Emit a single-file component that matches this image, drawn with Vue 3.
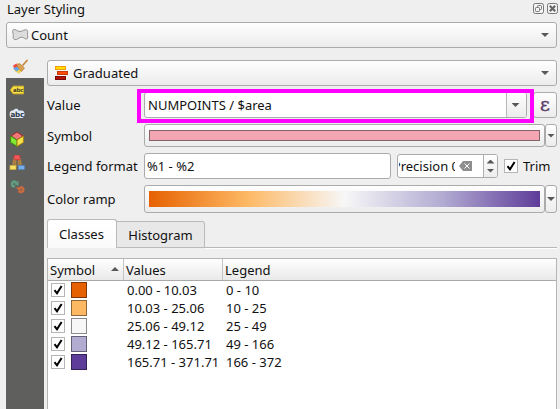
<script setup>
const classes = [
  { color: '#e66101', edge: '#80360a', values: '0.00 - 10.03', legend: '0 - 10' },
  { color: '#fdb863', edge: '#8d6737', values: '10.03 - 25.06', legend: '10 - 25' },
  { color: '#f7f7f7', edge: '#8a8a8a', values: '25.06 - 49.12', legend: '25 - 49' },
  { color: '#b2abd2', edge: '#636075', values: '49.12 - 165.71', legend: '49 - 166' },
  { color: '#5e3c99', edge: '#342155', values: '165.71 - 371.71', legend: '166 - 372' },
]
</script>

<template>
  <div class="dock">
    <header class="title">
      <span>Layer Styling</span>
      <span class="dock-buttons">
        <svg width="11" height="11" viewBox="0 0 11 11" fill="none" stroke="#777">
          <rect x=".5" y=".5" width="10" height="10" rx="1.8" fill="#f4f4f4" />
          <rect x="4.5" y="2.5" width="4" height="4" rx=".8" />
          <rect x="2.5" y="4.5" width="4" height="4" rx=".8" fill="#f4f4f4" />
        </svg>
        <svg width="11" height="11" viewBox="0 0 11 11" fill="none" stroke="#777">
          <rect x=".5" y=".5" width="10" height="10" rx="1.8" fill="#f4f4f4" />
          <path d="M2.800 2.800L8.200 8.200M8.200 2.800L2.800 8.200" stroke="#666" stroke-width="2.200" />
        </svg>
      </span>
    </header>

    <div class="combo layer">
      <svg class="poly" width="18" height="14" viewBox="0 0 18 14">
        <path d="M2.300 2.800C4.500 1.500 6 4.600 9 4.500S13.500 1.800 15.800 3c1.400.8.8 2.200.7 4 0 2 .8 4-.7 4.900-1.700.8-2.800-1.700-5-1.700-2.800 0-4.800 3.200-7 2.400C1.200 11.600 2.600 9.500 2.300 7.500 2 5.600.9 3.700 2.300 2.800Z" fill="#dcdcdc" stroke="#929292" />
      </svg>
      <span>Count</span>
      <i class="arrow down"></i>
    </div>

    <div class="body">
      <nav class="side">
        <div class="side-item current">
          <svg width="16" height="16" viewBox="0 0 16 16">
            <path d="M1.500 6.500l4.500-2.500 5 6-4 4.500-4.500-2.500z" fill="#e8c46a" />
            <path d="M1 6.500l3.500-2 2 3.500-4 2z" fill="#ef4b4b" />
            <path d="M1 9.500l4.500-2 2 3-2.500 2z" fill="#5fa6ee" />
            <path d="M5 12.500l3-3 2 2-3 3z" fill="#f2d34d" />
            <path d="M7.500 4.500l5 4.500-3 3.500-5-6z" fill="#d9a253" stroke="#b77a35" stroke-width=".7" />
            <path d="M11 6l4-4.500" stroke="#c78a42" stroke-width="1.800" stroke-linecap="round" />
          </svg>
        </div>
        <div class="side-rest">
          <svg width="16" height="16" viewBox="0 0 16 16">
            <path d="M1.500 8l2.700-3.800H14.500v7.600H4.200z" fill="#f8e04b" stroke="#d8b923" stroke-linejoin="round" />
            <text x="4" y="10.200" font-size="5.600" font-weight="700" fill="#454025">abc</text>
          </svg>
          <svg width="16" height="16" viewBox="0 0 16 16">
            <path d="M3.500 4.500Q5.500 4 6 2.700h2.500l1 1.800h3q3 .2 3 3.700t-3 3.700h-9Q.6 11.700.6 8.200t2.900-3.700z" fill="#dfe9f5" />
            <text x="1.500" y="10.700" font-size="7.200" font-weight="700" fill="#303a48">abc</text>
          </svg>
          <svg width="16" height="16" viewBox="0 0 16 16" stroke-linejoin="round">
            <path d="M8 1l6 4-6 4-6-4z" fill="#ee7777" stroke="#a52222" />
            <path d="M1.600 5L8 9v6.300L1.600 11.500z" fill="#82e833" stroke="#3f8616" />
            <path d="M14.400 5L8 9v6.300l6.400-3.800z" fill="#f8e34a" stroke="#a68416" />
          </svg>
          <svg width="16" height="16" viewBox="0 0 16 16">
            <path d="M4 10.500L5 4h6l1 6.500M6.500 5v6.500M9.700 5v6.500" fill="none" stroke="#b08040" stroke-width="1.800" />
            <rect x="5" y="0" width="6" height="4.800" fill="#ef5858" stroke="#bd3737" stroke-width=".7" />
            <rect x="1" y="10.500" width="6" height="4" fill="#f5df67" stroke="#d1ad3b" stroke-width=".7" />
            <rect x="9.300" y="10.500" width="6.200" height="4" fill="#78afea" stroke="#5284bd" stroke-width=".7" />
          </svg>
          <svg width="16" height="16" viewBox="0 0 16 16" fill="none">
            <path d="M7 3C4.500 1.800 2.700 3.500 3 5.500c.2 1.700 1.700 2.200 3 1.500" stroke="#609e80" stroke-width="2.600" />
            <path d="M9.500 1.500v5.500L5 5z" fill="#609e80" />
            <path d="M11.500 8c2.800.2 3.200 2.500 2.300 4-1 1.500-3.300 1.300-4 0" stroke="#cd6a3d" stroke-width="2.600" />
            <path d="M7 8.500l5.500-.5-1.500 5z" fill="#cd6a3d" />
          </svg>
        </div>
      </nav>

      <main class="main">
        <div class="combo renderer">
          <svg width="14" height="14" viewBox="0 0 14 14">
            <rect x=".5" y=".5" width="10" height="3" fill="#ffdf00" stroke="#f39c12" />
            <rect x="2.500" y="5.500" width="10" height="3" fill="#ff4b0b" stroke="#c63b05" />
            <rect x=".5" y="10.500" width="10" height="3" fill="#b51207" stroke="#790c05" />
          </svg>
          <span>Graduated</span>
          <i class="arrow down"></i>
        </div>

        <div class="row value-row">
          <label>Value</label>
          <div class="field value">
            <span>NUMPOINTS / $area</span>
            <div class="drop"><i class="arrow down"></i></div>
            <div class="highlight"></div>
          </div>
          <button class="btn eps">ε</button>
        </div>

        <div class="row symbol-row">
          <label>Symbol</label>
          <button class="btn wide"><span class="swatch"></span></button>
          <button class="btn mini"><i class="arrow down"></i></button>
        </div>

        <div class="row format-row">
          <label>Legend format</label>
          <div class="field format">%1 - %2</div>
          <div class="field spin">
            <span class="clip"><span>Precision 0</span></span>
            <svg width="13" height="10" viewBox="0 0 13 10">
              <path d="M0 5L4 0h9v10H4z" fill="#8e8e8e" />
              <path d="M5.500 2.500l5 5M10.500 2.500l-5 5" stroke="#fff" />
            </svg>
            <span class="steps"><i class="arrow up"></i><i class="arrow down"></i></span>
          </div>
          <span class="check"><svg width="10" height="10" viewBox="0 0 10 10"><path d="M1.500 5.200L4 8.300 8.600 1" /></svg></span>
          <span class="trim">Trim</span>
        </div>

        <div class="row ramp-row">
          <label>Color ramp</label>
          <button class="btn wide"><span class="ramp"></span></button>
          <button class="btn mini"><i class="arrow down"></i></button>
        </div>

        <div class="tabs">
          <div class="tab active">Classes</div>
          <div class="tab">Histogram</div>
          <div class="tab-line"></div>
        </div>

        <section class="table">
          <div class="thead">
            <div class="th">Symbol<i class="arrow up"></i></div>
            <div class="th">Values</div>
            <div class="th">Legend</div>
          </div>
          <div v-for="c in classes" :key="c.values" class="tr">
            <div class="sym">
              <span class="check"><svg width="10" height="10" viewBox="0 0 10 10"><path d="M1.500 5.200L4 8.300 8.600 1" /></svg></span>
              <span class="chip" :style="{ background: c.color, borderColor: c.edge }"></span>
            </div>
            <div class="td">{{ c.values }}</div>
            <div class="td">{{ c.legend }}</div>
          </div>
        </section>
      </main>
    </div>
  </div>
</template>

<style>
body { background: #efefef; overflow: hidden; }
</style>

<style scoped>
* { box-sizing: border-box; }
.dock {
  width: 560px; height: 409px; overflow: hidden; background: #efefef;
  font: 13px/18px "Noto Sans", sans-serif; color: #111;
  display: flex; flex-direction: column; white-space: nowrap;
}
.title { height: 22px; padding: 0 2px 0 7px; display: flex; justify-content: space-between; flex: none; }
.dock-buttons { display: flex; gap: 3px; padding-top: 3px; }
svg { display: block; flex: none; }
.combo, .btn {
  border: 1px solid #ababab; border-radius: 3px;
  background: linear-gradient(#fefefe, #ececec);
}
.combo { height: 26px; display: flex; align-items: center; flex: none; }
.combo .arrow { margin-left: auto; margin-right: 7px; }
.layer { margin: 0 3px 0 6px; padding-left: 4px; }
.layer span { margin-left: 2px; }
.poly { margin-bottom: 3px; }
.arrow { width: 8px; height: 4px; background: #585858; flex: none; }
.down { clip-path: polygon(0 0, 100% 0, 50% 100%); }
.up { clip-path: polygon(50% 0, 100% 100%, 0 100%); }
.body { flex: 1; display: flex; padding: 0 3px 0 6px; gap: 3px; min-height: 0; }
.side { width: 38px; display: flex; flex-direction: column; }
.side-item { height: 30px; padding: 11px 0 0 6px; }
.side-rest { flex: 1; background: #5f5f5e; padding: 4px 0 0 3px; display: flex; flex-direction: column; gap: 8.300px; }
.side text { font-family: "DejaVu Sans", sans-serif; letter-spacing: -.3px; }
.main { flex: 1; padding-top: 12px; display: flex; flex-direction: column; min-width: 0; }
.renderer { padding-left: 7px; }
.renderer span { margin-left: 4px; }
.row { display: flex; align-items: center; flex: none; }
.row label { width: 97px; flex: none; }
.field { border: 1px solid #ababab; border-radius: 3px; background: #fff; display: flex; align-items: center; }
.btn { padding: 0; margin: 0; display: flex; align-items: center; justify-content: center; }
.value-row { height: 26px; margin-top: 6px; }
.value { width: 383px; height: 26px; padding-left: 3px; position: relative; }
.drop { width: 20px; height: 24px; margin-left: auto; padding-right: 2px; border-left: 1px solid #b8b8b8; background: linear-gradient(#fefefe, #ececec); border-radius: 0 2px 2px 0; display: flex; align-items: center; justify-content: center; }
.highlight { position: absolute; left: -8px; top: -4px; width: 397px; height: 34px; border: 4px solid #f0f; }
.eps { width: 24px; height: 26px; margin-left: 6px; color: #5b3d69; font: 400 19px/18px "DejaVu Serif", serif; -webkit-text-stroke: .4px #5b3d69; padding: 0 0 3px 0; }
.symbol-row { height: 23px; margin-top: 6px; }
.wide { width: 401px; height: 100%; }
.swatch { width: 391px; height: 11px; background: #f4a5b2; border: 1px solid #82636a; }
.mini { width: 12px; height: 100%; }
.format-row { height: 26px; margin-top: 6px; }
.format { width: 247px; height: 26px; padding-left: 2px; }
.spin { width: 101px; height: 24px; margin-left: 6px; }
.clip { width: 56px; height: 18px; margin-left: 1px; margin-right: 4px; overflow: hidden; display: flex; justify-content: flex-end; }
.clip span { margin-right: -4px; }
.steps { width: 14px; height: 22px; margin-left: auto; border-left: 1px solid #b0b0b0; background: linear-gradient(#fefefe, #ececec); border-radius: 0 2px 2px 0; display: flex; flex-direction: column; align-items: center; justify-content: center; gap: 5px; }
.check { width: 14px; height: 14px; border: 1px solid #b5b5b5; background: #fff; display: flex; align-items: center; justify-content: center; flex: none; }
.check path { fill: none; stroke: #000; stroke-width: 2; }
.format-row .check { margin-left: 6px; }
.trim { margin-left: 5px; }
.ramp-row { height: 28px; margin-top: 6px; }
.ramp { width: 391px; height: 16px; background: linear-gradient(90deg, #e66101, #fdb863 25%, #f7f7f7 50%, #b2abd2 75%, #5e3c99); }
.tabs { height: 29px; margin-top: 6px; display: flex; align-items: flex-end; flex: none; }
.tab { height: 27px; width: 88px; border: 1px solid #bababa; border-left: 0; border-radius: 0 3px 0 0; background: #e8e8e8; padding-top: 4px; text-align: center; }
.tab.active { height: 29px; width: 70px; padding: 5px 1px 0 0; border-left: 1px solid #bababa; border-bottom: 0; border-radius: 3px 3px 0 0; background: linear-gradient(#fff, #fafafa); }
.tab-line { flex: 1; height: 2px; border-top: 1px solid #b8b8b8; background: #fff; margin-bottom: -1px; }
.table { flex: 1; margin-top: 10px; border: 1px solid #b5b5b5; border-bottom: 0; background: #fff; }
.thead, .tr { display: grid; grid-template-columns: 76px 99px 1fr; }
.thead { height: 22px; background: linear-gradient(#fff, #e9e9e9); border-bottom: 1px solid #aaa; }
.th { padding: 2px 0 0 2px; display: flex; justify-content: space-between; border-right: 1px solid #c4c4c4; }
.th:last-child { border-right: 0; }
.th .arrow { margin: 6px 4px 0 0; }
.tr { height: 18px; align-items: center; }
.sym { display: flex; gap: 6px; align-items: center; padding-left: 3px; }
.chip { width: 16px; height: 16px; border: 1px solid; }
.td { padding-left: 3px; }
</style>
